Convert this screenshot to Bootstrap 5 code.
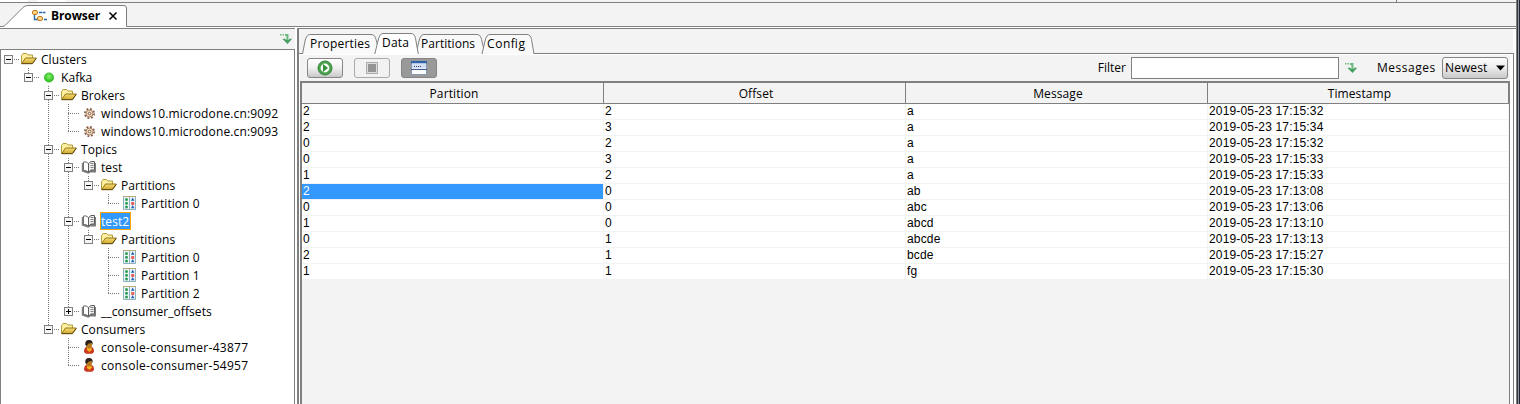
<!DOCTYPE html>
<html lang="en">
<head>
<meta charset="utf-8">
<title>Browser</title>
<link rel="stylesheet" href="https://cdn.jsdelivr.net/npm/bootstrap@5.3.0/dist/css/bootstrap.min.css">
<style>
:root{--ln:#808080;--bg:#f3f3f3}
body{font:12px/18px "Open Sans","Noto Sans",sans-serif;color:#000;background:#fff;height:404px}
svg{display:block;flex:none}
.app-win{width:1520px;height:404px}
.main-area{width:1517px;border-right:1px solid var(--ln)}
.top-edge{height:3px;border-bottom:1px solid var(--ln);width:1516px;background:linear-gradient(90deg,#fff 28px,var(--bg) 28px 37px,#fff 37px 65px,var(--bg) 65px)}
.top-edge i{width:1px;height:2px;margin-left:1396px;background:var(--ln)}
.strip{height:23px;background:var(--bg)}
.strip b{font-size:12px;letter-spacing:-.1px;margin-left:3px}
.strip-rule{height:1px;background:var(--ln)}
.outer-tab{width:128px;height:23px}
.outer-tab .face{left:0;top:1px}
.outer-tab .cap{padding:2px 0 0 31px}
.work{padding-top:1px}
.side{width:295px;flex:none;border-top:1px solid var(--ln)}
.side-head{height:20px;background:var(--bg);padding:4px 3px 0 0}
.tree{border:1px solid var(--ln);border-bottom:0}
.tree-row{height:18px;margin-left:-1px}
.tree-row .ic{width:20px;height:18px}
.tree-row .tx{margin-left:1px;white-space:nowrap;line-height:20px;height:18px;letter-spacing:.06px}
.tree-row .tx.t-gear{letter-spacing:.13px}
.tree-row .tx.t-user{letter-spacing:.28px}
.tree-row .tx.sel{background:#39f;color:#fff;outline:1px solid #ffa500;outline-offset:-1px;padding:0 2px 0 1px;margin-left:0}
.detail{border-left:2px solid var(--ln);border-top:1px solid var(--ln);background:#fff;margin-left:2px;width:1219px;flex:none}
.tabs{height:24px;background:var(--bg);padding:4px 0 0 3px;margin-right:3px}
.pane{border-top:1px solid var(--ln);border-right:1px solid var(--ln);margin-right:2px;padding:1px 3px 0 1px}
.tools{height:26px;background:var(--bg);padding:0 2px 1px 7px}
.tb{width:36px;height:20px;border:1px solid #878787;border-radius:3px;background:linear-gradient(#fff,#f0f0f0 50%,#c8c8c8);margin-right:11px}
.tb.off{background:#f2f2f2;border-color:#aaa}
.tb.on{background:#999;border-color:#858585}
.filter-in{width:208px;height:22px;border:1px solid var(--ln);background:#fff;margin:0 6px 0 5px;padding:0 3px;outline:0;border-radius:0}
.msg-lb{width:59px;margin-left:20px;letter-spacing:.5px}
.pick{width:66px;height:22px;border:1px solid #858585;border-radius:3px;background:linear-gradient(#fdfdfd,#eee 45%,#c9c9c9);padding:0 2px 0 2px;margin-left:6px;letter-spacing:.1px}
.grid-box{border:2px solid var(--ln);border-right-width:1px;border-bottom:0;background:var(--bg)}
.msgs{table-layout:fixed;width:1207px;border-collapse:separate;border-spacing:0;margin:0}
.msgs th{height:21px;font-weight:400;text-align:center;padding:2px 0 0 3px;line-height:18px;border-right:1px solid var(--ln);border-bottom:1px solid var(--ln);letter-spacing:.1px}
.msgs td{height:16px;padding:0 0 1px 1px;line-height:14px;background:#fff;border-right:1px solid var(--bg);border-bottom:1px solid var(--bg);font-family:"Liberation Sans",Arial,sans-serif;font-size:12px;letter-spacing:.16px}
.msgs td.sel{background:#39f;color:#fff}
.frame{width:3px;background:linear-gradient(90deg,#30363b 1px,#8e9ba6 1px 2px,#20262b 2px)}
</style>
</head>
<body>
<svg width="0" height="0" class="position-absolute"><defs>
<linearGradient id="gf" x2="0" y2="1"><stop stop-color="#f3dc74"/><stop offset="1" stop-color="#d2a92e"/></linearGradient>
<radialGradient id="gg" cx=".5" cy=".4"><stop stop-color="#8df06e"/><stop offset="1" stop-color="#2fc325"/></radialGradient>
<symbol id="i-folder" viewBox="0 0 20 18"><path d="M1.500 13V5.500L3 3.500h3.500L8 5h4.500v3.500" fill="#fdf0a0" stroke="#b39a3c"/><path d="M1.700 13.500L5.500 8h10.800l-4 5.500z" fill="url(#gf)" stroke="#967619"/><path d="M1.500 13.700h11l3.800-5.400" fill="none" stroke="#5f4c18"/></symbol>
<symbol id="i-dot" viewBox="0 0 20 18"><circle cx="9" cy="9.500" r="4.600" fill="url(#gg)" stroke="#35b92c" stroke-width=".8"/></symbol>
<symbol id="i-gear" viewBox="0 0 20 18"><circle cx="9.500" cy="9.500" r="4.700" fill="none" stroke="#8d6350" stroke-width="1.800" stroke-dasharray="1.900 1.790"/><circle cx="9.500" cy="9.500" r="3.500" fill="#f3dfba" stroke="#a17a62"/><circle cx="9.500" cy="9.500" r="1.300" fill="#fff" stroke="#84594b"/></symbol>
<symbol id="i-book" viewBox="0 0 20 18"><path d="M1.800 5v8.500l5.700 2h1.500l1-1h6V5z" fill="#7d7d7d"/><path d="M3.500 4q2.500-1 5 1.500v8.700q-2-2-5-1.700z" fill="#fff" stroke="#6c6c6c"/><path d="M8.500 5.500l2.500-2h3.500v8.500H11l-2.500 2.200z" fill="#eee" stroke="#5c5c5c"/><path d="M10.500 5.500h3m-3 2h3m-3 2h3" stroke="#868686"/></symbol>
<symbol id="i-part" viewBox="0 0 20 18"><path d="M3.500 2.500h12v13h-12z" fill="#eef8fc" stroke="#8fb1bd"/><path d="M3 2.500h13" stroke="#b6ab77"/><path d="M9.500 3v12" stroke="#8fb1bd"/><g fill="#2f9b54"><circle cx="6.500" cy="5.500" r="1.500"/><circle cx="6.500" cy="9.300" r="1.500"/><circle cx="6.500" cy="13" r="1.500"/></g><path d="M12.700 3.500l1.800 3.200h-3.600zM12.700 11l1.800 3.200h-3.600z" fill="#2563b5"/><path d="M11.200 8h3v3h-3z" fill="#e8605a"/></symbol>
<symbol id="i-user" viewBox="0 0 20 18"><path d="M4 14q0-5 3-5h4q3 0 3 5l-2 1.700H6z" fill="#c9381f"/><path d="M7 9h4l1 2.500-2.500 2.500L7 12z" fill="#f6b41d"/><ellipse cx="9" cy="6.500" rx="3" ry="4" fill="#b5791f"/><path d="M5.300 7Q4.800 2 9 2t3.700 5l-1-2-3 .5L6.500 8z" fill="#2b211b"/></symbol>
<symbol id="i-down" viewBox="0 0 12 12"><path d="M0 1h1.500v1.500H0zM2.500 1H4v1.500H2.500z" fill="#72bd80"/><path d="M5 1h3.500v6H6.300V3H5z" fill="#6dbb80"/><path d="M2.500 6l2-.5L6.300 7h2.200l1.500-1.500 2 .5-4.500 5z" fill="#45a062"/></symbol>
</defs></svg>
<div class="app-win d-flex overflow-hidden">
<div class="main-area d-flex flex-column">
  <div class="top-edge"><i class="d-block"></i></div>
  <div class="strip">
    <div class="outer-tab position-relative">
      <svg class="face position-absolute" width="128" height="24"><path d="M0 22.500h3l2-1L23 3.500Q25 1.500 28 1.500h96q2.500 0 2.500 2.500v20H0z" fill="#fff"/><path d="M0 22.500h3l2-1L23 3.500Q25 1.500 28 1.500h96q2.500 0 2.500 2.500v18.500" fill="none" stroke="#808080"/></svg>
      <div class="cap d-flex align-items-center position-relative h-100">
        <svg width="17" height="16"><path d="M3.500 6v5.500H8M8 4.500h3M11.500 4.500h3M13 11.500h3" fill="none" stroke="#2769a8" stroke-width="1.400"/><rect x="1.500" y="2.500" width="5" height="4" rx="1.500" fill="#ffd585" stroke="#c37b25"/><rect x="6.500" y="8.500" width="5" height="4" rx="1.500" fill="#ffd585" stroke="#c37b25"/></svg>
        <b>Browser</b>
        <svg class="ms-2" width="10" height="10"><path d="M1.500 1.500l7 7m0-7l-7 7" stroke="#000" stroke-width="1.500"/></svg>
      </div>
    </div>
  </div>
  <div class="d-flex" style="height:1px"><div style="width:126px"></div><div class="strip-rule flex-grow-1"></div></div>
  <div class="work d-flex flex-grow-1">
    <aside class="side d-flex flex-column">
      <div class="side-head d-flex justify-content-end"><svg width="12" height="12"><use href="#i-down"/></svg></div>
      <div class="tree flex-grow-1" id="tree"></div>
    </aside>
    <main class="detail d-flex flex-column">
      <div class="tabs position-relative">
        <svg width="240" height="21">
          <g stroke="#808080" fill="#f9f9f9">
            <path d="M.5 21L3 8Q4.500 1.500 8 1.500h61q4 0 5 5L78 21"/>
            <path d="M114 21l3-13q1.500-6.500 5-6.500h53q3.500 0 4.500 5L183 21"/>
            <path d="M180 21l3-13q1.500-6.500 5-6.500h37q3.500 0 4.500 5L232 21"/>
            <path d="M72.500 22L76 8Q77.500.5 81 .5h28q3.500 0 4.500 5l3 16.500" fill="#fff"/>
          </g>
          <g font-size="12">
            <text x="8" y="15" textLength="60">Properties</text><text x="80" y="14" textLength="27">Data</text><text x="119" y="15" textLength="54">Partitions</text><text x="185" y="15" textLength="38">Config</text>
          </g>
        </svg>
      </div>
      <section class="pane flex-grow-1 d-flex flex-column">
        <div class="tools d-flex align-items-center">
          <div class="tb d-flex align-items-center justify-content-center"><svg width="16" height="16"><circle cx="8" cy="8" r="5.800" fill="#fff" stroke="#4aa34c" stroke-width="2.800"/><circle cx="8" cy="8" r="7" fill="none" stroke="#2f7d33" stroke-width=".8"/><path d="M6 4l5 4-5 4z" fill="#338e38"/></svg></div>
          <div class="tb off d-flex align-items-center justify-content-center"><svg width="12" height="12"><path d="M.5.5h11v11H.5z" fill="#ddd" stroke="#aaa"/><path d="M2 2h8v8H2z" fill="#949494"/></svg></div>
          <div class="tb on d-flex align-items-center justify-content-center"><svg width="16" height="14"><path d="M.5.500h15v13H.5z" fill="#fbfcfe" stroke="#8797b0"/><path d="M0 0h16v2.500H0z" fill="#2f64a8"/><path d="M1 2.500h14v5H1z" fill="#d3dff5"/><path d="M3 5.500h8" stroke="#345" stroke-dasharray="1 1"/><path d="M0 8.500h16" stroke="#3d5a88"/></svg></div>
          <span class="ms-auto">Filter</span>
          <input class="filter-in" type="text" aria-label="Filter">
          <svg width="12" height="12"><use href="#i-down"/></svg>
          <span class="msg-lb">Messages</span>
          <div class="pick d-flex align-items-center justify-content-between"><span>Newest</span><svg width="9" height="6"><path d="M0 .5h9L4.500 5.500z"/></svg></div>
        </div>
        <div class="grid-box flex-grow-1">
          <table class="msgs"><colgroup><col style="width:302px"><col style="width:302px"><col style="width:302px"><col></colgroup>
          <thead><tr><th>Partition</th><th>Offset</th><th>Message</th><th>Timestamp</th></tr></thead><tbody id="rows"></tbody></table>
        </div>
      </section>
    </main>
  </div>
</div>
<div class="frame"></div>
</div>
<script src="https://cdn.jsdelivr.net/npm/bootstrap@5.3.0/dist/js/bootstrap.bundle.min.js"></script>
<script>
// guides: one letter per 20px column. "|" line, "." blank, "t"/"l" branch, "m"/"n" open box (more/last), "r" root, "p" closed box
const nodes = [
 ["r","folder","Clusters"],[".n","dot","Kafka"],["..m","folder","Brokers"],
 ["..|t","gear","windows10.microdone.cn:9092"],["..|l","gear","windows10.microdone.cn:9093"],
 ["..m","folder","Topics"],["..|m","book","test"],["..||n","folder","Partitions"],["..||.l","part","Partition 0"],
 ["..|m","book","test2",1],["..||n","folder","Partitions"],["..||.t","part","Partition 0"],["..||.t","part","Partition 1"],["..||.l","part","Partition 2"],
 ["..|p","book","__consumer_offsets"],["..n","folder","Consumers"],["...t","user","console-consumer-43877"],["...l","user","console-consumer-54957"]];
const cell = g => {
  let d = "";
  if ("|tm".includes(g)) d += "M8.5 0V18";
  if ("lnp".includes(g)) d += "M8.5 0V10";
  if ("tl".includes(g)) d += "M8 9.500H20";
  if ("mnrp".includes(g)) d += "M14 9.500H20";
  const box = "mnrp".includes(g) ? `<rect x="4.500" y="5.500" width="8" height="8" fill="#f6f6f6" stroke="#808080"/><path d="M6 9.500h5${g=="p"?"M8.500 7v5":""}" stroke="#000"/>` : "";
  return `<svg width="20" height="18"><path d="${d}" stroke="#777" stroke-dasharray="1 1"/>${box}</svg>`;
};
document.getElementById("tree").innerHTML = nodes.map(([g,i,t,s]) =>
 `<div class="tree-row d-flex">${[...g].map(cell).join("")}<svg class="ic"><use href="#i-${i}"/></svg><span class="tx t-${i}${s?" sel":""}">${t}</span></div>`).join("");
const rows = [[2,2,"a","15:32"],[2,3,"a","15:34"],[0,2,"a","15:32"],[0,3,"a","15:33"],[1,2,"a","15:33"],[2,0,"ab","13:08"],[0,0,"abc","13:06"],[1,0,"abcd","13:10"],[0,1,"abcde","13:13"],[2,1,"bcde","15:27"],[1,1,"fg","15:30"]];
document.getElementById("rows").innerHTML = rows.map((r,k) =>
 `<tr><td${k==5?' class="sel"':""}>${r[0]}</td><td>${r[1]}</td><td>${r[2]}</td><td>2019-05-23 17:${r[3]}</td></tr>`).join("");
</script>
</body>
</html>
